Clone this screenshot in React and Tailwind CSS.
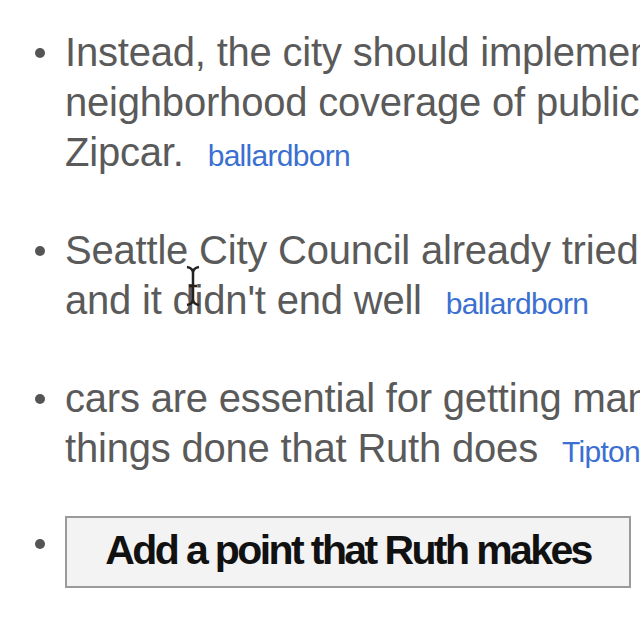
export default function App() {
  const items = [
    { lines: ["Instead, the city should implement better", "neighborhood coverage of public transit and", "Zipcar."], by: "ballardborn" },
    { lines: ["Seattle City Council already tried this", "and it didn't end well"], by: "ballardborn" },
    { lines: ["cars are essential for getting many of the", "things done that Ruth does"], by: "Tiptonian" },
  ];
  return (
    <div className="relative w-[640px] h-[640px] overflow-hidden bg-white" style={{ fontFamily: '"Liberation Sans", Arial, sans-serif' }}>
      <ul className="pt-[27px] flex flex-col gap-[44px]">
        {items.map((it, i) => (
          <li key={i} className="flex">
            <div className="w-[65px] shrink-0 flex justify-end pr-[20px] pt-[21px]">
              <div className="w-[10px] h-[10px] rounded-full bg-[#555]"></div>
            </div>
            <div className="text-[40px] leading-[50px] text-[#5a5a5a] whitespace-nowrap tracking-[-0.2px]">
              {it.lines.map((l, j) => (
                <div key={j}>
                  {l}
                  {j === it.lines.length - 1 && (
                    <span className="ml-[24px] text-[30px] text-[#3b6fd1] tracking-[-0.7px]">{it.by}</span>
                  )}
                </div>
              ))}
            </div>
          </li>
        ))}
        <li className="flex items-start -mt-[5px]">
          <div className="w-[65px] shrink-0 flex justify-end pr-[20px] pt-[23px]">
            <div className="w-[10px] h-[10px] rounded-full bg-[#555]"></div>
          </div>
          <button className="w-[566px] h-[72px] border-2 border-[#9a9a9a] bg-[#f3f3f3] text-[41px] font-bold text-[#111] tracking-[-2.6px] flex items-center justify-center pb-[2px]">
            Add a point that Ruth makes
          </button>
        </li>
      </ul>
      <svg className="absolute left-[184px] top-[265px]" width="18" height="42" viewBox="0 0 18 42">
        <path d="M3 2 Q9 3 9 8 L9 34 Q9 39 3 40 M15 2 Q9 3 9 8 M9 34 Q9 39 15 40 M5 21 L13 21" stroke="#222" strokeWidth="2.5" fill="none" />
      </svg>
    </div>
  );
}
